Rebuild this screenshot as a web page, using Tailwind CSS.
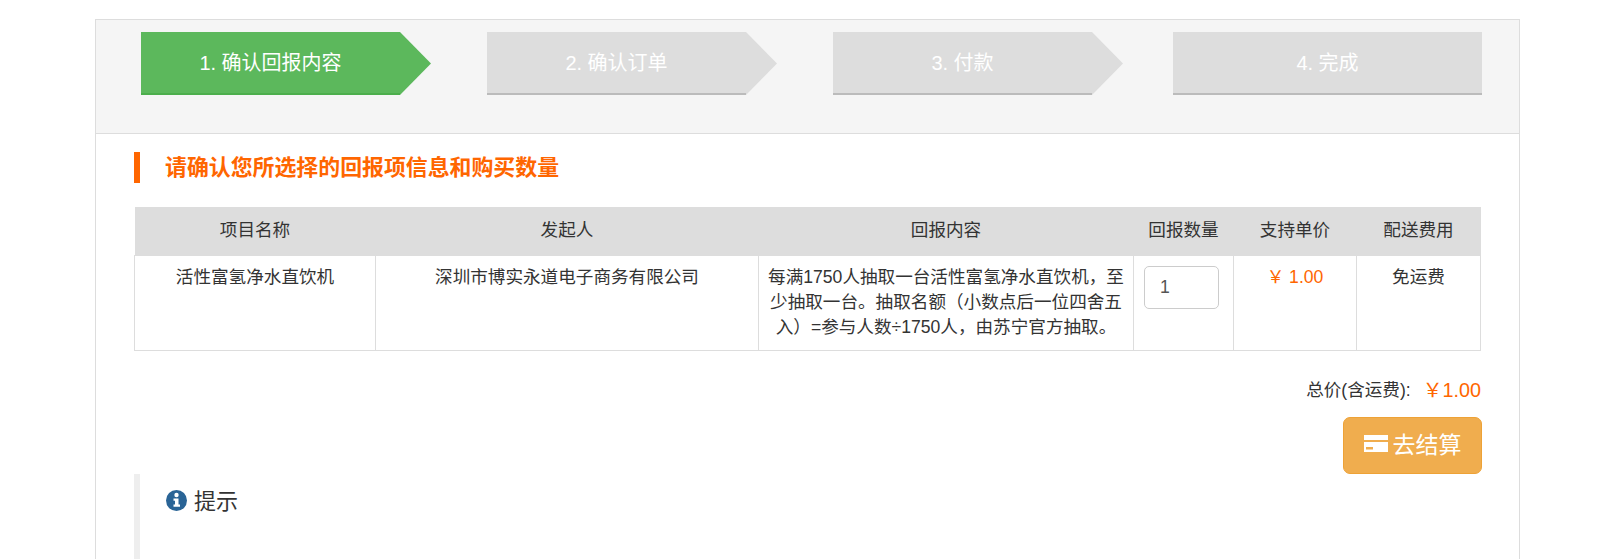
<!DOCTYPE html>
<html lang="zh-CN">
<head>
  <meta charset="UTF-8" />
  <meta name="viewport" content="width=device-width, initial-scale=1.0" />
  <title>确认回报内容</title>
  <script src="https://cdn.jsdelivr.net/npm/@tailwindcss/browser@4"></script>
</head>
<body class="h-[559px] overflow-hidden bg-white font-['Liberation_Sans','Noto_Sans_CJK_SC',sans-serif] text-[17.6px] leading-[25.1px] text-[#333]">
  <div class="ml-[95px] mt-[19px] h-[600px] w-[1425px] border border-[#ddd]">

    <!-- steps -->
    <div class="flex h-[114px] border-b border-[#ddd] bg-[#f5f5f5] pl-[45px] pt-[12px] text-[20px] text-white">
      <div class="flex h-[63px]">
        <div class="flex w-[259px] items-center justify-center border-b-2 border-[#4cae4c] bg-[#5cb85c] pt-[2px]">1. 确认回报内容</div>
        <svg width="31" height="63" viewBox="0 0 31 63"><path d="M0 0 L31 31.5 L0 63 Z" fill="#5cb85c" /></svg>
      </div>
      <div class="ml-[56px] flex h-[63px]">
        <div class="flex w-[259px] items-center justify-center border-b-2 border-[#bbb] bg-[#ddd] pt-[2px]">2. 确认订单</div>
        <svg width="31" height="63" viewBox="0 0 31 63"><path d="M0 0 L31 31.5 L0 63 Z" fill="#ddd" /></svg>
      </div>
      <div class="ml-[56px] flex h-[63px]">
        <div class="flex w-[259px] items-center justify-center border-b-2 border-[#bbb] bg-[#ddd] pt-[2px]">3. 付款</div>
        <svg width="31" height="63" viewBox="0 0 31 63"><path d="M0 0 L31 31.5 L0 63 Z" fill="#ddd" /></svg>
      </div>
      <div class="ml-[50px] flex h-[63px] w-[309px] items-center justify-center border-b-2 border-[#bbb] bg-[#ddd] pt-[2px]">4. 完成</div>
    </div>

    <div class="pl-[38px] pr-[37px] pt-[18px]">
      <h2 class="flex h-[31px] items-center border-l-[6px] border-[#ff6600] pl-[25px] text-[21.9px] font-bold text-[#ff6600]">请确认您所选择的回报项信息和购买数量</h2>

      <table class="mt-[24px] w-[1346px] table-fixed border-collapse text-center">
        <colgroup>
          <col class="w-[241px]" />
          <col class="w-[383px]" />
          <col class="w-[375px]" />
          <col class="w-[100px]" />
          <col class="w-[123px]" />
          <col class="w-[124px]" />
        </colgroup>
        <thead>
          <tr class="h-[48px] bg-[#ddd]">
            <th class="font-normal">项目名称</th>
            <th class="font-normal">发起人</th>
            <th class="font-normal">回报内容</th>
            <th class="font-normal">回报数量</th>
            <th class="font-normal">支持单价</th>
            <th class="font-normal">配送费用</th>
          </tr>
        </thead>
        <tbody>
          <tr class="align-top">
            <td class="border border-[#ddd] px-[8.8px] pb-[10px] pt-[9px]">活性富氢净水直饮机</td>
            <td class="border border-[#ddd] px-[8.8px] pb-[10px] pt-[9px]">深圳市博实永道电子商务有限公司</td>
            <td class="border border-[#ddd] px-[7px] pb-[10px] pt-[9px]">每满1750人抽取一台活性富氢净水直饮机，至少抽取一台。抽取名额（小数点后一位四舍五入）=参与人数÷1750人，由苏宁官方抽取。</td>
            <td class="border border-[#ddd] pb-[10px] pl-[10px] pt-[9px] text-left">
              <input type="text" value="1" class="mt-[1px] h-[43px] w-[75px] rounded-[5px] border border-[#ccc] bg-white px-[15px] text-[17.6px] text-[#555]" />
            </td>
            <td class="border border-[#ddd] px-[8.8px] pb-[10px] pt-[9px] text-[#ff6600]">￥ 1.00</td>
            <td class="border border-[#ddd] px-[8.8px] pb-[10px] pt-[9px]">免运费</td>
          </tr>
        </tbody>
      </table>

      <div class="mr-[1px] mt-[27px] flex items-center justify-end">
        <span>总价(含运费):</span>
        <span class="ml-[12px] text-[19.8px] text-[#ff6600]">￥1.00</span>
      </div>

      <div class="mt-[14px] flex justify-end">
        <button class="flex h-[57px] w-[139px] items-center justify-center gap-[5px] rounded-[7px] border border-[#eea236] bg-[#f0ad4e] text-[23px] text-white">
          <svg width="24" height="17" viewBox="0 0 24 17" class="mb-[3px]">
            <path fill="#fff" fill-rule="evenodd" d="M0 0 H24 V5 H0 Z M0 7 H24 V17 H0 Z M2 12 V14.500 H9 V12 Z" />
          </svg>
          去结算
        </button>
      </div>

      <div class="h-[120px] border-l-[6px] border-[#eee] pl-[26px] pt-[16px]">
        <div class="flex items-center gap-[7px] text-[22px] leading-[24px]">
          <svg width="21" height="21" viewBox="0 0 21 21" class="mb-[3px]">
            <circle cx="10.500" cy="10.500" r="10.500" fill="#2a6496" />
            <circle cx="10.500" cy="5" r="2.200" fill="#fff" />
            <path fill="#fff" d="M7.500 8.500 H12.500 V14.500 H14 V16.800 H7.500 V14.500 H9 V10.800 H7.500 Z" />
          </svg>
          提示
        </div>
      </div>
    </div>
  </div>
</body>
</html>
